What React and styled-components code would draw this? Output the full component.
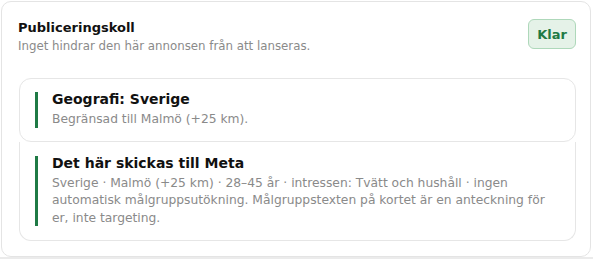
import React from "react";
import styled, { createGlobalStyle } from "styled-components";

const GlobalStyle = createGlobalStyle`
  body {
    margin: 0;
    background: #ebebeb;
    font-family: "DejaVu Sans", Verdana, sans-serif;
  }
`;

const Page = styled.div`
  background: #fff;
  padding: 1px 2px 0 1px;
  height: 257px;
  box-sizing: border-box;
`;

const Panel = styled.section`
  border: 1px solid #e4e4e4;
  border-radius: 10px;
  background: #fff;
  padding: 16px 14px 14px 16px;
  height: 256px;
  box-sizing: border-box;
`;

const Header = styled.div`
  display: flex;
  justify-content: space-between;
  align-items: flex-start;
  margin-bottom: 23px;
`;

const Heading = styled.h2`
  margin: 1px 0 0;
  font-size: 13px;
  line-height: 17px;
  font-weight: bold;
  color: #111;
`;

const Sub = styled.p`
  margin: 2px 0 0;
  font-size: 11.8px;
  line-height: 17px;
  color: #8a8a8a;
`;

const Badge = styled.span`
  display: inline-flex;
  align-items: center;
  justify-content: center;
  width: 48px;
  height: 30px;
  box-sizing: border-box;
  border: 1px solid #aed8ba;
  border-radius: 6px;
  background: #e5f2e8;
  color: #1f7a45;
  font-size: 13px;
  font-weight: bold;
  margin-top: 1px;
`;

const List = styled.div`
  display: flex;
  flex-direction: column;
  margin-left: 1px;
`;

const Item = styled.div`
  border: 1px solid #e6e6e6;
  border-top: ${(p) => (p.first ? "1px solid #e6e6e6" : "none")};
  border-radius: ${(p) => (p.first ? "12px" : "0 0 12px 12px")};
  padding: ${(p) => (p.first ? "10px 16px 12px" : "11px 16px 13px")} 32px;
`;

const Body = styled.div`
  position: relative;

  &::before {
    content: "";
    position: absolute;
    left: -17px;
    top: 3px;
    bottom: 1px;
    width: 3px;
    background: #1f7a45;
  }
`;

const ItemTitle = styled.div`
  font-size: 14px;
  line-height: 20px;
  font-weight: bold;
  color: #111;
`;

const ItemText = styled.div`
  margin-top: 2px;
  font-size: 12.3px;
  line-height: 17.5px;
  color: #8a8a8a;
`;

export default function App() {
  return (
    <>
      <GlobalStyle />
      <Page>
        <Panel>
          <Header>
            <div>
              <Heading>Publiceringskoll</Heading>
              <Sub>Inget hindrar den här annonsen från att lanseras.</Sub>
            </div>
            <Badge>Klar</Badge>
          </Header>
          <List>
            <Item first>
              <Body>
                <ItemTitle>Geografi: Sverige</ItemTitle>
                <ItemText>Begränsad till Malmö (+25 km).</ItemText>
              </Body>
            </Item>
            <Item>
              <Body>
                <ItemTitle>Det här skickas till Meta</ItemTitle>
                <ItemText>
                  Sverige · Malmö (+25 km) · 28–45 år · intressen: Tvätt och
                  hushåll · ingen automatisk målgruppsutökning. Målgruppstexten
                  på kortet är en anteckning för er, inte targeting.
                </ItemText>
              </Body>
            </Item>
          </List>
        </Panel>
      </Page>
    </>
  );
}
